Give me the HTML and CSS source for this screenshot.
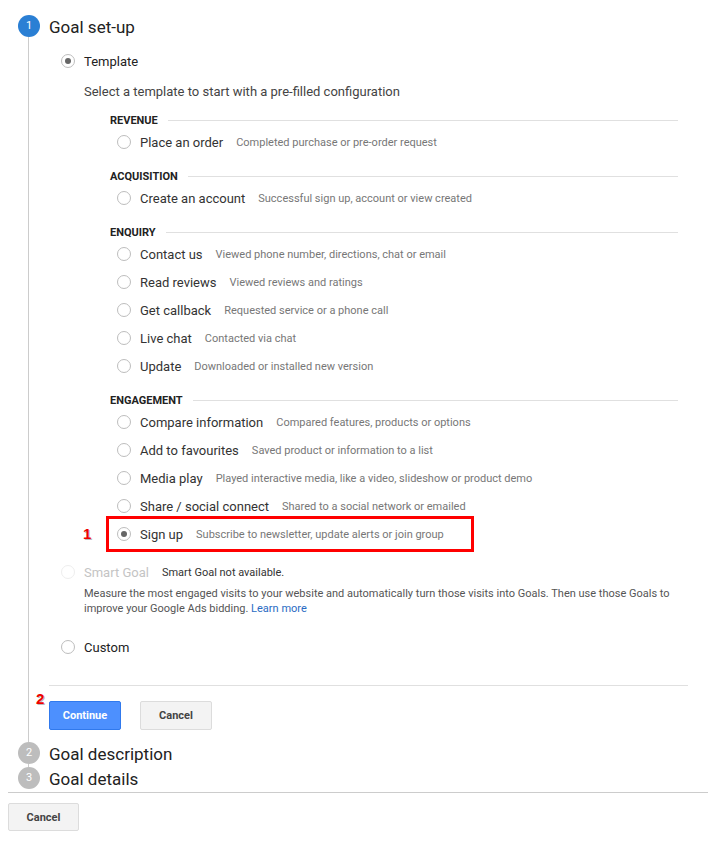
FILE: index.html
```html
<!DOCTYPE html>
<html lang="en">
<head>
  <meta charset="UTF-8">
  <title>Goal set-up</title>
  <link rel="stylesheet" href="styles.css">
</head>
<body>
  <div class="goal-page">
    <div class="goal-step">
      <div class="step-head">
        <span class="step-num active">1</span>
        <span class="step-title">Goal set-up</span>
      </div>
      <div class="step-body">
        <div class="opt-row top">
          <span class="radio checked"></span>
          <span class="opt-label">Template</span>
        </div>
        <div class="hint">Select a template to start with a pre-filled configuration</div>

        <div class="tpl-groups">
          <div class="tpl-head"><span>REVENUE</span><i></i></div>
          <div class="tpl-row"><span class="radio"></span><span class="tpl-label">Place an order</span><span class="tpl-desc">Completed purchase or pre-order request</span></div>

          <div class="tpl-head"><span>ACQUISITION</span><i></i></div>
          <div class="tpl-row"><span class="radio"></span><span class="tpl-label">Create an account</span><span class="tpl-desc">Successful sign up, account or view created</span></div>

          <div class="tpl-head"><span>ENQUIRY</span><i></i></div>
          <div class="tpl-row"><span class="radio"></span><span class="tpl-label">Contact us</span><span class="tpl-desc">Viewed phone number, directions, chat or email</span></div>
          <div class="tpl-row"><span class="radio"></span><span class="tpl-label">Read reviews</span><span class="tpl-desc">Viewed reviews and ratings</span></div>
          <div class="tpl-row"><span class="radio"></span><span class="tpl-label">Get callback</span><span class="tpl-desc">Requested service or a phone call</span></div>
          <div class="tpl-row"><span class="radio"></span><span class="tpl-label">Live chat</span><span class="tpl-desc">Contacted via chat</span></div>
          <div class="tpl-row"><span class="radio"></span><span class="tpl-label">Update</span><span class="tpl-desc">Downloaded or installed new version</span></div>

          <div class="tpl-head"><span>ENGAGEMENT</span><i></i></div>
          <div class="tpl-row"><span class="radio"></span><span class="tpl-label">Compare information</span><span class="tpl-desc">Compared features, products or options</span></div>
          <div class="tpl-row"><span class="radio"></span><span class="tpl-label">Add to favourites</span><span class="tpl-desc">Saved product or information to a list</span></div>
          <div class="tpl-row"><span class="radio"></span><span class="tpl-label">Media play</span><span class="tpl-desc">Played interactive media, like a video, slideshow or product demo</span></div>
          <div class="tpl-row"><span class="radio"></span><span class="tpl-label">Share / social connect</span><span class="tpl-desc">Shared to a social network or emailed</span></div>
          <div class="tpl-row marked"><span class="mark mark-1">1</span><span class="radio checked"></span><span class="tpl-label">Sign up</span><span class="tpl-desc">Subscribe to newsletter, update alerts or join group</span></div>
        </div>

        <div class="opt-row smart">
          <span class="radio off"></span>
          <span class="opt-label muted">Smart Goal</span>
          <span class="smart-note">Smart Goal not available.</span>
        </div>
        <div class="smart-desc">Measure the most engaged visits to your website and automatically turn those visits into Goals. Then use those Goals to improve your Google Ads bidding. <a href="#">Learn more</a></div>

        <div class="opt-row custom">
          <span class="radio"></span>
          <span class="opt-label">Custom</span>
        </div>

        <div class="step-divider"></div>
        <div class="step-actions">
          <span class="mark mark-2">2</span>
          <button class="btn btn-primary">Continue</button>
          <button class="btn">Cancel</button>
        </div>
      </div>
    </div>

    <div class="step-head">
      <span class="step-num">2</span>
      <span class="step-title">Goal description</span>
    </div>
    <div class="step-link"></div>
    <div class="step-head">
      <span class="step-num">3</span>
      <span class="step-title">Goal details</span>
    </div>

    <div class="page-divider"></div>
    <button class="btn btn-bottom">Cancel</button>
  </div>
</body>
</html>
```

FILE: styles.css
```css
* {
  box-sizing: border-box;
  margin: 0;
  padding: 0;
}

body {
  font-family: Roboto, "Liberation Sans", sans-serif;
  color: #333;
  background: #fff;
  padding: 15px 8px 0;
}

.goal-page {
  width: 700px;
}

/* steps */
.step-head {
  display: flex;
  align-items: center;
  height: 22px;
  column-gap: 9px;
}

.step-num {
  width: 22px;
  height: 22px;
  margin-left: 10px;
  border-radius: 50%;
  background: #bdbdbd;
  color: #fff;
  font-size: 11px;
  line-height: 22px;
  text-align: center;
}

.step-num.active {
  background: #2a7fd4;
}

.step-title {
  font-size: 17px;
  color: #222;
  padding-top: 1px;
}

.step-link {
  height: 3px;
  margin-left: 20px;
  border-left: 1px solid #ccc;
}

.step-body {
  margin-left: 20px;
  border-left: 1px solid #ccc;
  padding: 14px 20px 12px 20px;
}

/* radio */
.radio {
  width: 14px;
  height: 14px;
  flex-shrink: 0;
  border: 1px solid #bdbdbd;
  border-radius: 50%;
  display: flex;
  align-items: center;
  justify-content: center;
}

.radio.checked::after {
  content: "";
  width: 6px;
  height: 6px;
  border-radius: 50%;
  background: #666;
}

.radio.off {
  border-color: #eee;
}

.opt-row {
  display: flex;
  align-items: center;
  column-gap: 9px;
  height: 20px;
  padding-left: 12px;
}

.opt-label {
  font-size: 13px;
  color: #222;
}

.opt-label.muted {
  color: #c4c4c4;
}

.hint {
  font-size: 13px;
  line-height: 20px;
  color: #444;
  margin-top: 10px;
  padding: 1px 0 0 35px;
}

/* template list */
.tpl-groups {
  margin: 10px 10px 0 61px;
}

.tpl-head {
  display: flex;
  align-items: center;
  column-gap: 10px;
  height: 16px;
  margin-top: 12px;
  font-size: 11px;
  font-weight: 700;
  color: #222;
}

.tpl-head:first-child {
  margin-top: 0;
}

.tpl-head i {
  flex: 1;
  height: 1px;
  background: #e0e0e0;
}

.tpl-row {
  position: relative;
  display: flex;
  align-items: center;
  height: 28px;
  padding-left: 7px;
}

.tpl-row .radio {
  margin-right: 9px;
}

.tpl-label {
  font-size: 13px;
  color: #333;
  margin-right: 13px;
}

.tpl-desc {
  font-size: 11px;
  color: #777;
}

.tpl-row.marked {
  width: 360px;
  outline: 3px solid #f00;
  outline-offset: 1px;
}

.mark {
  position: absolute;
  font-family: "Liberation Sans", Arial, sans-serif;
  font-size: 15px;
  font-weight: 700;
  color: #e00;
  text-shadow: 1px 1px 0 #bbb;
}

.mark-1 {
  left: -27px;
  top: 5px;
}

.mark-2 {
  left: -13px;
  top: -11px;
}

/* smart goal */
.opt-row.smart {
  margin-top: 14px;
}

.smart-note {
  font-size: 11px;
  color: #333;
  margin-left: 4px;
}

.smart-desc {
  margin-top: 4px;
  padding-left: 35px;
  font-size: 11px;
  line-height: 15px;
  color: #555;
}

.smart-desc a {
  color: #2a6bc3;
  text-decoration: none;
}

.opt-row.custom {
  margin-top: 21px;
}

.step-divider {
  height: 1px;
  background: #e0e0e0;
  margin-top: 28px;
}

.step-actions {
  position: relative;
  display: flex;
  column-gap: 19px;
  margin-top: 15px;
}

/* buttons */
.btn {
  height: 29px;
  min-width: 72px;
  padding: 0 12px;
  border: 1px solid #dcdcdc;
  border-radius: 2px;
  background: #f3f3f3;
  color: #444;
  font-family: Roboto, "Liberation Sans", sans-serif;
  font-size: 11px;
  font-weight: 700;
}

.btn-primary {
  background: #4d90fe;
  border-color: #3079ed;
  color: #fff;
}

.page-divider {
  height: 1px;
  background: #ccc;
  margin-top: 3px;
}

.btn-bottom {
  margin-top: 10px;
  height: 28px;
  min-width: 71px;
}
```
